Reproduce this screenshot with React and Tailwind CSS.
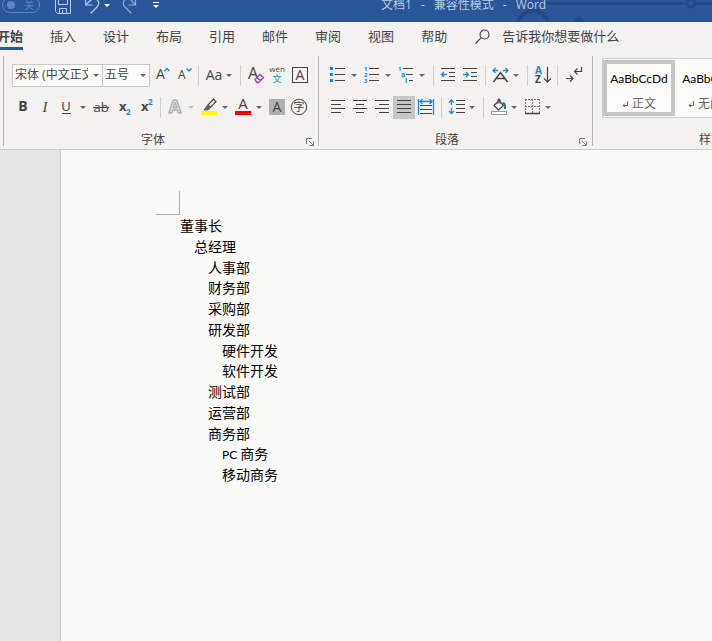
import { useState } from "react";

const tabs = ["开始", "插入", "设计", "布局", "引用", "邮件", "审阅", "视图", "帮助"];

const outline = [
  { text: "董事长", level: 0 },
  { text: "总经理", level: 1 },
  { text: "人事部", level: 2 },
  { text: "财务部", level: 2 },
  { text: "采购部", level: 2 },
  { text: "研发部", level: 2 },
  { text: "硬件开发", level: 3 },
  { text: "软件开发", level: 3 },
  { text: "测试部", level: 2 },
  { text: "运营部", level: 2 },
  { text: "商务部", level: 2 },
  { latin: "PC ", text: "商务", level: 3 },
  { text: "移动商务", level: 3 },
];

const indents = ["pl-0", "pl-[14px]", "pl-[28px]", "pl-[42px]"];

const INK = "#444444";
const BLUE = "#1e8bcd";

function Icon({ children }) {
  return (
    <svg width="16" height="16" viewBox="0 0 16 16" fill="none" stroke={INK} className="shrink-0 overflow-visible" aria-hidden="true">
      {children}
    </svg>
  );
}

function Glyph({ x, y, size, children, fill = INK, weight = 400, anchor = "start" }) {
  return (
    <text x={x} y={y} fontSize={size} fill={fill} stroke="none" fontWeight={weight} textAnchor={anchor}>
      {children}
    </text>
  );
}

function Tool({ label, active = false, onClick, children }) {
  return (
    <button type="button" aria-label={label} title={label} aria-pressed={active} onClick={onClick} className={`flex h-[23px] w-[22px] shrink-0 items-center justify-center ${active ? "bg-[#c6c6c6]" : "hover:bg-[#dadada]"}`}>
      {children}
    </button>
  );
}

function Caret({ label, muted = false }) {
  return (
    <button type="button" aria-label={label} className="flex h-[23px] w-3 shrink-0 items-center pl-[2px]">
      <svg width="6" height="3" viewBox="0 0 6 3" aria-hidden="true">
        <path d="M0 0h6L3 3z" fill={muted ? "#bdbdbd" : "#666666"} />
      </svg>
    </button>
  );
}

function Divider() {
  return <span className="ml-1 mr-[3px] h-[21px] w-px shrink-0 bg-[#d0d0d0]" />;
}

function Combo({ label, options, className }) {
  return (
    <div className={`relative h-[23px] shrink-0 ${className}`}>
      <select aria-label={label} className="block h-full w-full appearance-none border border-[#c8c8c8] bg-[#fcfcfb] pl-[2px] pr-[14px] text-[12px] text-[#444444] outline-none">
        {options.map((option) => <option key={option}>{option}</option>)}
      </select>
      <svg width="6" height="3" viewBox="0 0 6 3" className="pointer-events-none absolute right-1 top-[10px]" aria-hidden="true">
        <path d="M0 0h6L3 3z" fill="#666666" />
      </svg>
    </div>
  );
}

function Launcher({ label }) {
  return (
    <button type="button" aria-label={label} className="-mr-2 flex w-6 shrink-0 items-end justify-end pr-1">
      <svg width="8" height="8" viewBox="0 0 8 8" fill="none" stroke="#777777" aria-hidden="true">
        <path d="M.5 6V.5H6M3 3l4 4M7.500 3.500v4h-4" />
      </svg>
    </button>
  );
}

function Group({ title, className = "", children }) {
  return (
    <section aria-label={title} className={`flex h-[90px] shrink-0 flex-col border-r border-[#b4b4b4] ${className}`}>
      <div className="flex-1">{children}</div>
      <div className="flex h-3 text-[12px] leading-[12px] text-[#444444]">
        <span className="flex-1 text-center">{title}</span>
        <Launcher label={`${title}设置`} />
      </div>
    </section>
  );
}

function Row({ children }) {
  return <div className="flex h-8 items-center">{children}</div>;
}

function TitleBar() {
  return (
    <header className="relative h-[22px] overflow-hidden bg-[#2b579a] text-[#b9cbe6]">
      <svg width="200" height="22" viewBox="0 0 200 22" fill="none" stroke="#234a86" className="absolute left-[512px] top-0" aria-hidden="true">
        <circle cx="21" cy="27" r="16" strokeWidth="4" />
        <path d="M3 3.500h172M184 3.500h16" strokeWidth="3" />
        <circle cx="179" cy="3" r="4" strokeWidth="3" />
        <circle cx="67" cy="22" r="5" fill="#234a86" stroke="none" />
      </svg>
      <div className="relative -mt-3 flex h-[34px] items-center">
        <button type="button" aria-label="自动保存" className="ml-[2px] flex h-4 w-[38px] shrink-0 items-center justify-between rounded-full border border-[#5f86bf] pl-1 pr-[5px] text-[10px] text-[#5f86bf]">
          <span className="size-2 rounded-full bg-[#5f86bf]" />
          关
        </button>
        <button type="button" aria-label="保存" className="ml-[15px]">
          <svg width="16" height="18" viewBox="0 0 16 18" fill="none" stroke="#b9cbe6" aria-hidden="true">
            <path d="M.5 1.500h15v16H2.500l-2-2zM3.500 1.500v7h9v-7M4.500 17.500v-5h7v5M7.500 14v3" />
          </svg>
        </button>
        <button type="button" aria-label="撤消" className="ml-[14px]">
          <svg width="15" height="18" viewBox="0 0 15 18" fill="none" stroke="#b9cbe6" strokeWidth="1.200" aria-hidden="true">
            <path d="M.5 2v7h7M1 8.500 6 4c5-3.500 10 2 6.500 6.500L5.500 17.500" />
          </svg>
        </button>
        <button type="button" aria-label="撤消选项" className="ml-1">
          <svg width="6" height="3" viewBox="0 0 6 3" aria-hidden="true"><path d="M0 0h6L3 3z" fill="#ffffff" /></svg>
        </button>
        <button type="button" aria-label="恢复" className="ml-3">
          <svg width="15" height="18" viewBox="0 0 15 18" fill="none" stroke="#8faad3" strokeWidth="1.200" aria-hidden="true">
            <path d="M13.500 2v7h-7M13 8.500 9 4C4 .5-1 6 2.500 10.500l7 7" />
          </svg>
        </button>
        <button type="button" aria-label="自定义快速访问工具栏" className="ml-4">
          <svg width="6" height="7" viewBox="0 0 6 7" aria-hidden="true"><path d="M0 0h6v1H0zM0 3h6L3 6z" fill="#ffffff" /></svg>
        </button>
        <h1 className="ml-[222px] flex gap-[9px] whitespace-nowrap text-[12px]">
          <span>文档1</span><span>-</span><span>兼容性模式</span><span>-</span><span>Word</span>
        </h1>
      </div>
    </header>
  );
}

function TabStrip({ current, onSelect }) {
  return (
    <nav aria-label="功能区选项卡" className="-ml-[3px] flex h-[34px] shrink-0 items-start gap-[27px] whitespace-nowrap text-[13px] text-[#444444]">
      {tabs.map((tab) => (
        <button key={tab} type="button" onClick={() => onSelect(tab)} className={`h-7 shrink-0 border-b-[3px] leading-[28px] ${tab === current ? "border-[#2b579a] font-bold" : "border-transparent"}`}>
          {tab}
        </button>
      ))}
      <button type="button" className="flex h-7 shrink-0 items-center gap-3 pt-[1px]">
        <svg width="16" height="16" viewBox="0 0 16 16" fill="none" stroke={INK} strokeWidth="1.200" aria-hidden="true">
          <circle cx="10.500" cy="5.500" r="4.500" />
          <path d="M7.300 8.700 1.500 14.500" />
        </svg>
        告诉我你想要做什么
      </button>
    </nav>
  );
}

function FontGroup() {
  return (
    <Group title="字体" className="px-2 pt-[3px]">
      <Row>
        <Combo label="字体" options={["宋体 (中文正文)"]} className="w-[91px]" />
        <Combo label="字号" options={["五号"]} className="-ml-px w-12" />
        <Tool label="增大字号">
          <Icon><Glyph x="3" y="12" size="14">A</Glyph><path d="m11.500 4 2.500-2.500L16.500 4" stroke={BLUE} strokeWidth="1.500" /></Icon>
        </Tool>
        <Tool label="减小字号">
          <Icon><Glyph x="3" y="12" size="12">A</Glyph><path d="m11.500 1.500 2.500 2.500 2.500-2.500" stroke={BLUE} strokeWidth="1.500" /></Icon>
        </Tool>
        <Divider />
        <Tool label="更改大小写"><Icon><Glyph x="9" y="13" size="14" anchor="middle">Aa</Glyph></Icon></Tool>
        <Caret label="大小写选项" />
        <Divider />
        <Tool label="清除所有格式">
          <Icon>
            <Glyph x="1" y="12" size="16">A</Glyph>
            <path d="m8 12.500 5-5 3.500 3-5 5h-1.500zM10 10.500l3.500 3" fill="#f3f2f1" stroke="#a43bb0" strokeWidth="1.300" />
          </Icon>
        </Tool>
        <Tool label="拼音指南">
          <Icon><Glyph x="8" y="5" size="8" anchor="middle">wén</Glyph><Glyph x="8" y="15" size="9" fill={BLUE} anchor="middle">文</Glyph></Icon>
        </Tool>
        <Tool label="字符边框">
          <Icon><rect x="1.500" y=".5" width="15" height="15" /><Glyph x="9" y="13" size="14" anchor="middle">A</Glyph></Icon>
        </Tool>
      </Row>
      <Row>
        <Tool label="加粗"><Icon><Glyph x="8" y="12" size="14" weight="700" anchor="middle">B</Glyph></Icon></Tool>
        <Tool label="倾斜"><span className="font-['Liberation_Serif',serif] text-[15px] italic text-[#444444]">I</span></Tool>
        <Tool label="下划线"><Icon><Glyph x="7" y="12" size="13" anchor="middle">U</Glyph><path d="M3 14.500h9" /></Icon></Tool>
        <Caret label="下划线选项" />
        <Tool label="删除线"><Icon><Glyph x="8" y="13" size="13" anchor="middle">ab</Glyph><path d="M0 8.500h16" /></Icon></Tool>
        <Tool label="下标"><Icon><Glyph x="4" y="12" size="13" weight="700">x</Glyph><Glyph x="11" y="16" size="8" fill={BLUE} weight="700">2</Glyph></Icon></Tool>
        <Tool label="上标"><Icon><Glyph x="4" y="12" size="13" weight="700">x</Glyph><Glyph x="11" y="6" size="8" fill={BLUE} weight="700">2</Glyph></Icon></Tool>
        <Divider />
        <Tool label="文本效果">
          <Icon><text x="8" y="14" fontSize="18" fontWeight="700" textAnchor="middle" fill="#e4e4e4" stroke="#a0a0a0">A</text></Icon>
        </Tool>
        <Caret label="文本效果选项" muted />
        <Tool label="突出显示">
          <Icon>
            <path d="m7 6 5.500-6 2.500 2.500L9.500 8.500z" strokeWidth="1.200" />
            <path d="m6.500 6 3 3L7 11H3z" fill="#666666" stroke="#666666" />
            <path d="M0 12h16v4H0z" fill="#ffff00" stroke="none" />
          </Icon>
        </Tool>
        <Caret label="突出显示颜色" />
        <Tool label="字体颜色">
          <Icon><Glyph x="8" y="10" size="15" anchor="middle">A</Glyph><path d="M0 12h16v4H0z" fill="#ff0000" stroke="none" /></Icon>
        </Tool>
        <Caret label="字体颜色选项" />
        <Tool label="字符底纹">
          <Icon><path d="M0 0h16v16H0z" fill="#b0b0b0" stroke="none" /><Glyph x="8" y="13" size="14" anchor="middle">A</Glyph></Icon>
        </Tool>
        <Tool label="带圈字符">
          <Icon><circle cx="8" cy="8" r="7.700" /><Glyph x="8" y="12" size="11" anchor="middle">字</Glyph></Icon>
        </Tool>
      </Row>
    </Group>
  );
}

const aligns = [
  ["左对齐", "M1 1.500h14M1 5.500h10M1 9.500h14M1 13.500h10"],
  ["居中", "M1 1.500h14M4 5.500h8M1 9.500h14M4 13.500h8"],
  ["右对齐", "M1 1.500h14M5 5.500h10M1 9.500h14M5 13.500h10"],
  ["两端对齐", "M1 1.500h14M1 5.500h14M1 9.500h14M1 13.500h14"],
];

function ParagraphGroup() {
  const [align, setAlign] = useState("两端对齐");

  return (
    <Group title="段落" className="pl-2 pr-[9px] pt-[3px]">
      <Row>
        <Tool label="项目符号">
          <Icon><path d="M5 1.500h10M5 7.500h10M5 13.500h10" /><path d="M0 0h3v3H0zM0 6h3v3H0zM0 12h3v3H0z" fill={BLUE} stroke="none" /></Icon>
        </Tool>
        <Caret label="项目符号库" />
        <Tool label="编号">
          <Icon>
            <path d="M5 1.500h10M5 7.500h10M5 13.500h10" />
            <Glyph x="0" y="4" size="6" fill={BLUE} weight="700">1</Glyph>
            <Glyph x="0" y="10" size="6" fill={BLUE} weight="700">2</Glyph>
            <Glyph x="0" y="16" size="6" fill={BLUE} weight="700">3</Glyph>
          </Icon>
        </Tool>
        <Caret label="编号库" />
        <Tool label="多级列表">
          <Icon>
            <path d="M5 1.500h10M8 7.500h7M11 13.500h4" />
            <Glyph x="0" y="4" size="6" fill={BLUE} weight="700">1</Glyph>
            <Glyph x="3" y="10" size="7" fill={BLUE} weight="700">a</Glyph>
            <Glyph x="7" y="16" size="7" fill={BLUE} weight="700">i</Glyph>
          </Icon>
        </Tool>
        <Caret label="列表库" />
        <Divider />
        <Tool label="减少缩进量">
          <Icon><path d="M1 1.500h14M9 5.500h6M9 9.500h6M1 13.500h14" /><path d="M7 7.500H1.500M4 5 1.500 7.500 4 10" stroke={BLUE} strokeWidth="1.300" /></Icon>
        </Tool>
        <Tool label="增加缩进量">
          <Icon><path d="M1 1.500h14M9 5.500h6M9 9.500h6M1 13.500h14" /><path d="M1 7.500h5.500M4 5l2.500 2.500L4 10" stroke={BLUE} strokeWidth="1.300" /></Icon>
        </Tool>
        <Divider />
        <Tool label="中文版式">
          <Icon>
            <path d="M6 3.500H1M3.500 1 1 3.500 3.500 6M11 3.500h5M13.500 1 16 3.500 13.500 6" stroke={BLUE} strokeWidth="1.300" />
            <path d="M1.500 15 8.500 5.500 15.500 15M4.500 11.500h8" strokeWidth="1.500" />
          </Icon>
        </Tool>
        <Caret label="中文版式选项" />
        <Divider />
        <Tool label="排序">
          <Icon>
            <Glyph x="1" y="7" size="10" fill={BLUE} weight="700">A</Glyph>
            <Glyph x="1" y="16" size="10" weight="700">Z</Glyph>
            <path d="M13.500 0v15M10 11.500l3.500 3.500 3.500-3.500" strokeWidth="1.200" />
          </Icon>
        </Tool>
        <Divider />
        <Tool label="显示编辑标记">
          <Icon><path d="M17.500 0v4.500H10.500M13.500 1.500l-3 3 3 3M2 11.500h7M6 8.500l3 3-3 3" strokeWidth="1.200" /></Icon>
        </Tool>
      </Row>
      <Row>
        {aligns.map(([label, d]) => (
          <Tool key={label} label={label} active={align === label} onClick={() => setAlign(label)}>
            <Icon><path d={d} /></Icon>
          </Tool>
        ))}
        <Tool label="分散对齐">
          <Icon>
            <path d="M2 6.500h12M2 10.500h12M2 14.500h12" />
            <path d="M.5 0v16M15.500 0v16M2 2.500h12M4.500 0 2 2.500 4.500 5M11.500 0 14 2.500 11.500 5" stroke={BLUE} strokeWidth="1.300" />
          </Icon>
        </Tool>
        <Divider />
        <Tool label="行和段落间距">
          <Icon><path d="M8 1.500h9M8 5.500h9M8 9.500h9M8 13.500h9" /><path d="M3.500 1v5M1 3.500 3.500 1 6 3.500M3.500 9v5.500M1 12l2.500 2.500L6 12" stroke={BLUE} strokeWidth="1.300" /></Icon>
        </Tool>
        <Caret label="间距选项" />
        <Divider />
        <Tool label="底纹">
          <Icon>
            <path d="m4 6.500 5-5 4.500 5-5 4.500zM8 4.500V1.500C8-.5 10-.5 10 1.500V4.500" strokeWidth="1.200" />
            <path d="M12.500 4c2 0 3 2 2.500 6" stroke="#1e6fb4" strokeWidth="2" />
            <rect x="1.500" y="12.500" width="15" height="3" fill="#ffffff" stroke="#999999" />
          </Icon>
        </Tool>
        <Caret label="底纹颜色" />
        <Tool label="边框">
          <Icon><path d="M1.500 0v14M15.500 0v14M8.500 0v14M1 .5h15M1 7.500h15" stroke="#777777" strokeDasharray="2 1" /><path d="M1 14.500h15" strokeWidth="1.500" /></Icon>
        </Tool>
        <Caret label="边框选项" />
      </Row>
    </Group>
  );
}

function StyleTile({ name, selected = false }) {
  return (
    <button type="button" aria-pressed={selected} className={`flex h-14 w-[72px] shrink-0 flex-col items-center justify-between whitespace-nowrap border-4 pt-[6px] ${selected ? "border-[#c6c6c6]" : "border-transparent"}`}>
      <span className="font-['Lato',sans-serif] text-[12px] leading-[18px] text-black">AaBbCcDd</span>
      <span className="flex items-center gap-1 text-[12px] leading-[16px] text-[#666666]">
        <svg width="6" height="6" viewBox="0 0 6 6" fill="none" stroke="#666666" aria-hidden="true">
          <path d="M5.500 0v4.500H1M3 2.500l-2 2 2 1.500" />
        </svg>
        {name}
      </span>
    </button>
  );
}

function StylesGroup() {
  return (
    <Group title="样式" className="w-[252px] pl-[9px] pr-2 pt-[2px]">
      <div className="flex h-[60px] items-center overflow-hidden border border-[#d0d0d0] bg-[#fcfcfb]">
        <StyleTile name="正文" selected />
        <StyleTile name="无间隔" />
      </div>
    </Group>
  );
}

export default function App() {
  const [tab, setTab] = useState("开始");

  return (
    <div className="flex min-h-screen flex-col overflow-hidden bg-[#f3f2f1] font-['Open_Sans','Noto_Sans_CJK_SC',sans-serif]">
      <TitleBar />
      <TabStrip current={tab} onSelect={setTab} />
      <div className="flex overflow-hidden border-b border-[#cfcdcb] pb-[3px]">
        <span className="ml-[3px] w-px shrink-0 bg-[#b4b4b4]" />
        <FontGroup />
        <ParagraphGroup />
        <StylesGroup />
      </div>
      <div className="flex flex-1">
        <aside className="w-[60px] shrink-0 bg-[#e6e6e6]" />
        <main className="flex-1 border-l border-[#c8c8c8] bg-[#fafaf9] pl-[95px] pt-[41px]">
          <div className="size-6 border-b border-r border-[#ababab]" />
          <ul className="grid h-[270px] auto-rows-fr pl-6 font-['Lato','Noto_Sans_CJK_SC',sans-serif] text-[14px] leading-[21px] text-black">
            {outline.map(({ latin, text, level }) => (
              <li key={text} className={`whitespace-nowrap ${indents[level]}`}>
                {latin && <span className="text-[12px]">{latin}</span>}
                {text}
              </li>
            ))}
          </ul>
        </main>
      </div>
    </div>
  );
}
